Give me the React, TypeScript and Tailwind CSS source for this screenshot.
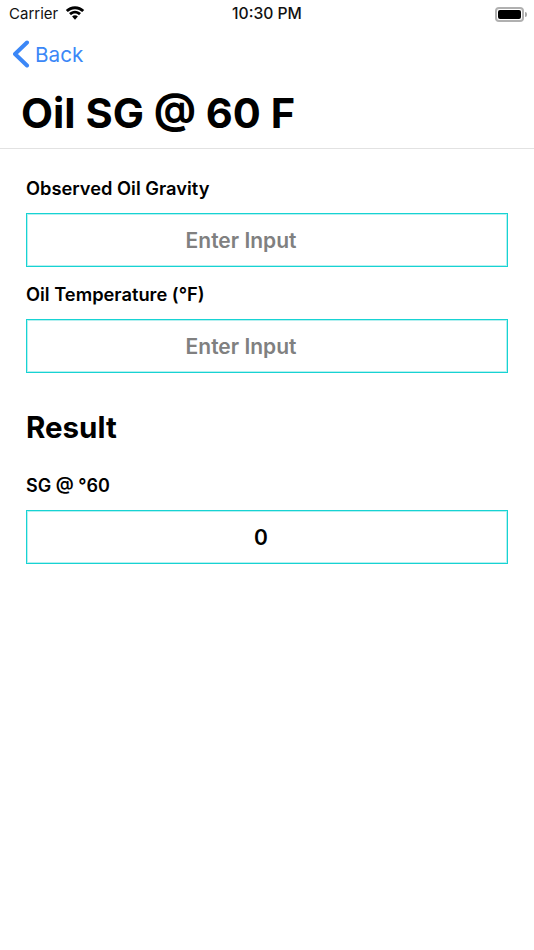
import React from "react";

const font = { fontFamily: "Inter, 'Liberation Sans', sans-serif" };

function Wifi() {
  return (
    <svg width="20" height="15" viewBox="0 0 20 15" fill="#000" className="ml-[8px] mt-[-1px]">
      <path d="M10 3.200c2.800 0 5.300 1.100 7.200 2.900l2-2.100C16.800 1.700 13.600.300 10 .300S3.200 1.700.800 4l2 2.100C4.700 4.300 7.200 3.200 10 3.200z" />
      <path d="M10 7.600c1.500 0 2.900.6 4 1.600l2-2.100C14.400 5.600 12.300 4.700 10 4.700S5.600 5.600 4 7.100l2 2.100c1.100-1 2.500-1.600 4-1.600z" />
      <path d="M10 9.200c-1.100 0-2.100.4-2.900 1.200l2.900 3.400 2.900-3.400c-.8-.8-1.800-1.200-2.900-1.200z" />
    </svg>
  );
}

function Battery() {
  return (
    <div className="flex items-center">
      <div className="w-[29px] h-[15px] rounded-[4px] border-2 border-[#b0b0b0] p-[1px]">
        <div className="w-full h-full rounded-[2px] bg-black" />
      </div>
      <div className="w-[2px] h-[5px] bg-[#a8a8a8] rounded-r-sm ml-[1px]" />
    </div>
  );
}

function Field({ label, value, placeholder, pr, labelClass = "text-[18.300px] leading-[22px]" }: { label: string; value: string; placeholder?: boolean; pr: string; labelClass?: string }) {
  return (
    <div className="flex flex-col">
      <div className={`h-[24px] font-semibold text-black ${labelClass}`}>{label}</div>
      <div className={`mt-[12px] h-[54px] border border-[#17d3d3] shadow-[inset_0_0_0_1px_#b5f0f0] flex items-center justify-center ${pr}`}>
        <span className={`text-[21px] font-semibold pt-[1px] ${placeholder ? "text-[#808080]" : "text-black"}`}>{value}</span>
      </div>
    </div>
  );
}

export default function App() {
  return (
    <div style={font} className="w-[534px] h-[950px] bg-white flex flex-col overflow-hidden">
      <div className="h-[28px] pl-[9px] pr-[7px] flex items-center relative">
        <span className="text-[15px] text-[#111] w-[48px]">Carrier</span>
        <Wifi />
        <span className="ml-[147px] text-[15.700px] font-medium text-[#111]">10:30 PM</span>
        <div className="flex-1" />
        <Battery />
      </div>
      <div className="h-[52px] flex items-center pl-[13px]">
        <svg width="17" height="28" viewBox="0 0 17 28" fill="none" stroke="#3b87f7" strokeWidth="4" strokeLinecap="round" strokeLinejoin="round">
          <path d="M14 2.500 2 14l12 11.500" />
        </svg>
        <span className="ml-[5px] pt-[2px] text-[20.700px] text-[#3b87f7]">Back</span>
      </div>
      <div className="h-[69px] border-b border-[#e2e2e2] pl-[21px] pt-[9px]">
        <h1 className="text-[41.600px] leading-[48px] font-bold text-black">Oil SG @ 60 F</h1>
      </div>
      <div className="px-[26px] pt-[28px] flex flex-col">
        <Field label="Observed Oil Gravity" value="Enter Input" placeholder pr="pr-[52px]" />
        <div className="mt-[16px]">
          <Field label="Oil Temperature (°F)" value="Enter Input" placeholder pr="pr-[52px]" />
        </div>
        <h2 className="mt-[34px] h-[40px] leading-[40px] text-[29.500px] font-bold text-black">Result</h2>
        <div className="mt-[27px]">
          <Field label="SG @ °60" value="0" pr="pr-[12px]" labelClass="text-[18px] leading-[24px]" />
        </div>
      </div>
    </div>
  );
}
